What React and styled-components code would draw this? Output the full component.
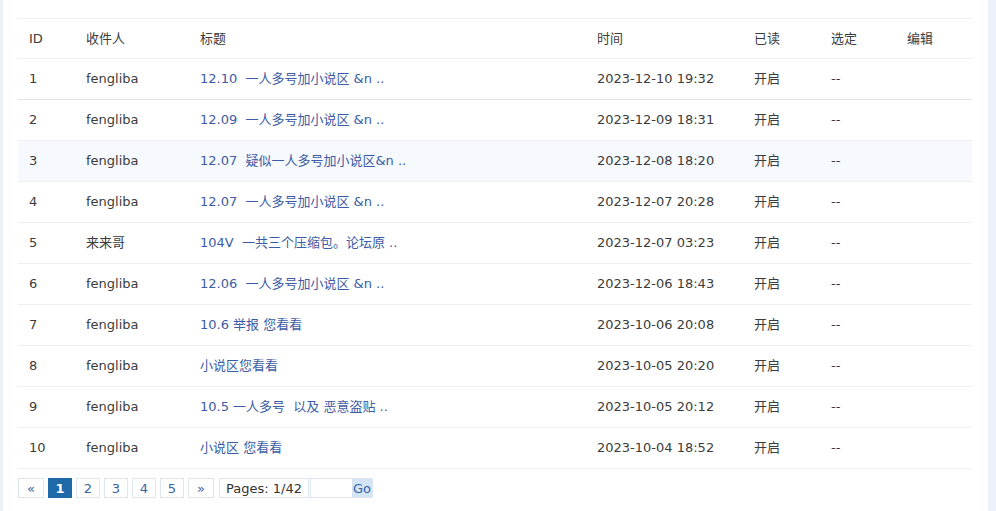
import React from 'react';
import styled, {createGlobalStyle} from 'styled-components';

const GlobalStyle = createGlobalStyle`
    html, body {
        margin: 0;
        padding: 0;
        background: #edf2fa;
        font-family: "DejaVu Sans", "Noto Sans CJK SC", sans-serif;
        font-size: 13px;
        color: #3c3c3c;
    }
`;

const Panel = styled.div`
    margin-left: 3px;
    width: 985px;
    min-height: 511px;
    box-sizing: border-box;
    background: #fff;
    padding: 18px 0 0 15px;
`;

const Table = styled.table`
    width: 954px;
    border-collapse: collapse;
    table-layout: fixed;
    border-top: 1px solid #f0f0f0;
`;

const Row = styled.tr`
    border-bottom: ${p => p.$strong ? '1px solid #e2e2e2' : '1px solid #efefef'};
    box-shadow: ${p => p.$strong ? '0 1px 0 #ececec' : 'none'};
    background: ${p => p.$hover ? '#f6f9fd' : '#fff'};
`;

const Cell = styled.td`
    height: 40px;
    padding: 0 0 0 11px;
    white-space: pre;
    overflow: hidden;
    vertical-align: middle;
    line-height: 16px;
`;

const HeadCell = styled(Cell).attrs({as: 'th'})`
    height: 39px;
    font-weight: normal;
    text-align: left;
`;

const Link = styled.a`
    color: #3d5ca5;
    text-decoration: none;
`;

const Pager = styled.div`
    display: flex;
    align-items: center;
    gap: 4px;
    margin-top: 9px;
    font-family: "DejaVu Sans", sans-serif;
`;

const PageBox = styled.span`
    display: inline-flex;
    align-items: center;
    justify-content: center;
    box-sizing: border-box;
    height: 20px;
    min-width: ${p => p.$w || 24}px;
    padding: 0 6px;
    border: 1px solid ${p => p.$active ? '#1e6aa8' : '#dde5ee'};
    background: ${p => p.$active ? '#1e6aa8' : '#fff'};
    color: ${p => p.$active ? '#fff' : '#3a63a5'};
    font-weight: ${p => p.$active ? 'bold' : 'normal'};
    font-size: 13px;
`;

const Info = styled(PageBox)`
    color: #333;
    margin-left: 1px;
`;

const GoGroup = styled.span`
    display: inline-flex;
    height: 20px;
    border: 1px solid #dde5ee;
    box-sizing: border-box;
    margin-left: -3px;
`;

const GoInput = styled.span`
    width: 41px;
    background: #fff;
`;

const GoButton = styled.span`
    display: inline-flex;
    align-items: center;
    padding: 0 1px;
    background: #d3e5f5;
    color: #3a63a5;
    font-size: 13px;
`;

const cols = [57, 114, 397, 157, 77, 76, 76];

const rows = [
    [1, 'fengliba', '12.10  一人多号加小说区 &n ..', '2023-12-10 19:32'],
    [2, 'fengliba', '12.09  一人多号加小说区 &n ..', '2023-12-09 18:31'],
    [3, 'fengliba', '12.07  疑似一人多号加小说区&n ..', '2023-12-08 18:20'],
    [4, 'fengliba', '12.07  一人多号加小说区 &n ..', '2023-12-07 20:28'],
    [5, '来来哥', '104V  一共三个压缩包。论坛原 ..', '2023-12-07 03:23'],
    [6, 'fengliba', '12.06  一人多号加小说区 &n ..', '2023-12-06 18:43'],
    [7, 'fengliba', '10.6 举报 您看看', '2023-10-06 20:08'],
    [8, 'fengliba', '小说区您看看', '2023-10-05 20:20'],
    [9, 'fengliba', '10.5 一人多号  以及 恶意盗贴 ..', '2023-10-05 20:12'],
    [10, 'fengliba', '小说区 您看看', '2023-10-04 18:52'],
];

export default function App() {
    return (
        <>
            <GlobalStyle/>
            <Panel>
                <Table>
                    <colgroup>
                        {cols.map((w, i) => <col key={i} style={{width: w}}/>)}
                    </colgroup>
                    <thead>
                        <Row>
                            <HeadCell>ID</HeadCell>
                            <HeadCell>收件人</HeadCell>
                            <HeadCell>标题</HeadCell>
                            <HeadCell>时间</HeadCell>
                            <HeadCell>已读</HeadCell>
                            <HeadCell>选定</HeadCell>
                            <HeadCell>编辑</HeadCell>
                        </Row>
                    </thead>
                    <tbody>
                        {rows.map(([id, user, title, time]) => (
                            <Row key={id} $strong={id === 1} $hover={id === 3}>
                                <Cell>{id}</Cell>
                                <Cell>{user}</Cell>
                                <Cell><Link href="#">{title}</Link></Cell>
                                <Cell>{time}</Cell>
                                <Cell>开启</Cell>
                                <Cell>--</Cell>
                                <Cell></Cell>
                            </Row>
                        ))}
                    </tbody>
                </Table>
                <Pager>
                    <PageBox $w={26}>«</PageBox>
                    <PageBox $active>1</PageBox>
                    <PageBox>2</PageBox>
                    <PageBox>3</PageBox>
                    <PageBox>4</PageBox>
                    <PageBox>5</PageBox>
                    <PageBox $w={26}>»</PageBox>
                    <Info>Pages: 1/42</Info>
                    <GoGroup>
                        <GoInput/>
                        <GoButton>Go</GoButton>
                    </GoGroup>
                </Pager>
            </Panel>
        </>
    );
}
